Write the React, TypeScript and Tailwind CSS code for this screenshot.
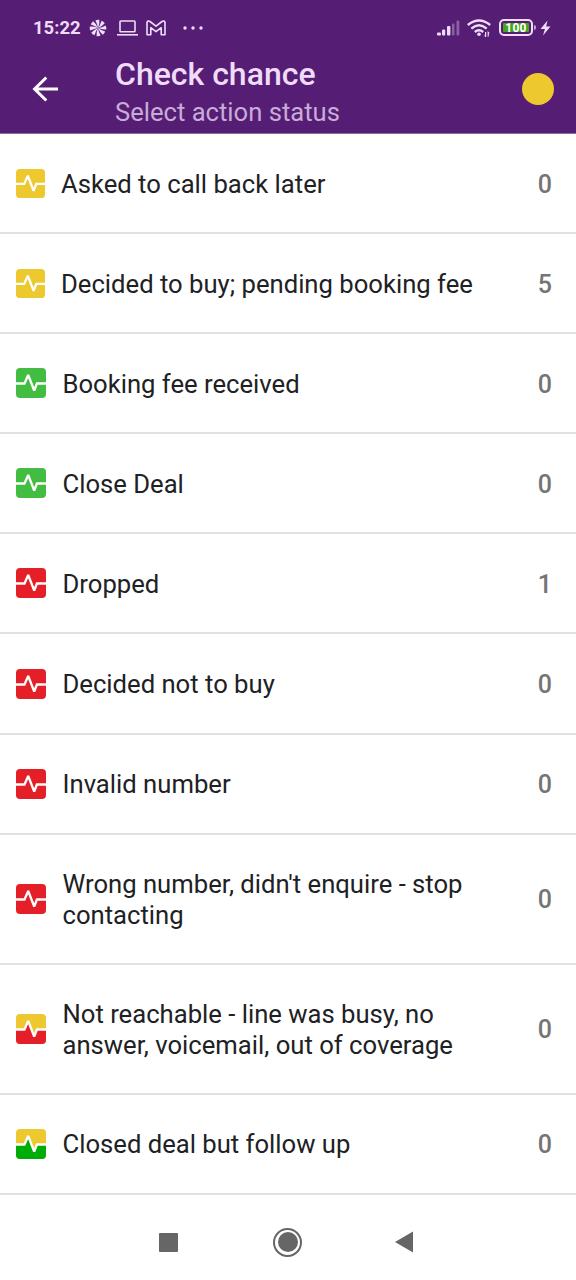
interface Status {
  label: string;
  count: number;
  top: string;
  bottom: string;
  compact?: boolean;
}

const YELLOW = "#edc92f";
const GREEN = "#42bd42";
const RED = "#e51f27";

const statuses: Status[] = [
  { label: "Asked to call back later", count: 0, top: YELLOW, bottom: YELLOW, compact: true },
  { label: "Decided to buy; pending booking fee", count: 5, top: YELLOW, bottom: YELLOW, compact: true },
  { label: "Booking fee received", count: 0, top: GREEN, bottom: GREEN },
  { label: "Close Deal", count: 0, top: GREEN, bottom: GREEN },
  { label: "Dropped", count: 1, top: RED, bottom: RED },
  { label: "Decided not to buy", count: 0, top: RED, bottom: RED },
  { label: "Invalid number", count: 0, top: RED, bottom: RED },
  { label: "Wrong number, didn't enquire - stop contacting", count: 0, top: RED, bottom: RED },
  {
    label: "Not reachable - line was busy, no answer, voicemail, out of coverage",
    count: 0,
    top: YELLOW,
    bottom: RED,
  },
  { label: "Closed deal but follow up", count: 0, top: YELLOW, bottom: "#00ad08" },
];

function PulseIcon({ top, bottom, compact }: Pick<Status, "top" | "bottom" | "compact">) {
  return (
    <svg viewBox="0 0 30 30" className={`shrink-0 ${compact ? "size-[29px]" : "size-[30px]"}`}>
      <rect width="30" height="30" rx="4" fill={top} />
      {bottom !== top && (
        <path d="M0 15.5H8.5L12.2 7L18.2 22.5L20.9 15.5H30V26A4 4 0 0 1 26 30H4A4 4 0 0 1 0 26Z" fill={bottom} />
      )}
      <path
        d="M0 15.5H8.5L12.2 7L18.2 22.5L20.9 15.5H30"
        fill="none"
        stroke="#fff"
        strokeWidth="2.3"
        strokeMiterlimit="2.5"
      />
    </svg>
  );
}

function StatusBar() {
  return (
    <div className="flex h-[55px] items-center pl-[33px] pr-[25px] text-[#eedcf8]">
      <span className="w-[46px] pt-px text-[18.5px] font-bold leading-none">15:22</span>
      <svg viewBox="0 0 18 18" className="ml-[10px] size-[18px]">
        {[0, 45, 90, 135, 180, 225, 270, 315].map((a) => (
          <path
            key={a}
            d="M9 9Q8.4 5 6.4 1.4Q8.4 0.4 10.4 0.8Q10.8 5 9 9Z"
            fill="currentColor"
            transform={`rotate(${a} 9 9)`}
          />
        ))}
      </svg>
      <svg viewBox="0 0 21 16" className="ml-[10px] h-4 w-[21px]" fill="none" stroke="currentColor" strokeWidth="1.6">
        <rect x="3" y="1" width="15" height="10.7" rx="0.8" />
        <path d="M0 14.8H21" />
      </svg>
      <svg viewBox="0 0 20 16" className="ml-[8px] h-4 w-5" fill="none" stroke="currentColor" strokeWidth="1.6" strokeLinejoin="round">
        <path d="M1 14.7V2.4Q1.8.3 4 1.5L10 6.2L16 1.5Q18.2.3 19 2.4V14.7H15.2V7.7L10 11.6L4.8 7.7V14.7Z" />
      </svg>
      <svg viewBox="0 0 20 4" className="ml-[17px] h-1 w-5" fill="currentColor">
        <circle cx="2" cy="2" r="1.7" />
        <circle cx="10" cy="2" r="1.7" />
        <circle cx="18" cy="2" r="1.7" />
      </svg>

      <svg viewBox="0 0 23 16" className="ml-auto h-4 w-[23px]" fill="currentColor">
        <rect x="0" y="12.5" width="4" height="3" rx="1" />
        <rect x="5" y="9.5" width="3.2" height="6" rx="1" />
        <rect x="10" y="6" width="3.4" height="9.5" rx="1" />
        <rect x="15" y="3.5" width="2.5" height="12" rx="1" opacity="0.35" />
        <rect x="19.5" y="0.5" width="2.8" height="15" rx="1" opacity="0.35" />
      </svg>
      <svg viewBox="0 0 24 18" className="ml-[7px] h-[18px] w-6" fill="none" stroke="currentColor" strokeWidth="2.4">
        <path d="M0.8 6Q12-3 23.2 6" />
        <path d="M4.3 9.6Q12 3 19.7 9.6" />
        <path d="M7.8 13Q12 9.4 16.2 13" />
        <circle cx="12" cy="15.3" r="1.8" fill="currentColor" stroke="none" />
        <path d="M18.6 13V17.4L17.6 16.4M21.2 17.6V13.4L22.2 14.4" strokeWidth="1.2" />
      </svg>
      <div className="ml-[8px] flex h-[17px] w-[34px] items-center rounded-[5px] border-2 border-current p-[2px]">
        <div className="flex h-full w-full items-center justify-center rounded-[1px] bg-[#45a41d] text-[12px] font-bold leading-none tracking-[0.3px] text-white">
          100
        </div>
      </div>
      <div className="ml-px h-[5px] w-[2px] rounded-r-sm bg-current opacity-70" />
      <svg viewBox="0 0 11 16" className="ml-[4px] h-4 w-[11px]" fill="currentColor">
        <path d="M7.5 0.5L0.5 9H4.9L3 15.5L10.5 6.5H6.2Z" />
      </svg>
    </div>
  );
}

export default function App() {
  return (
    <div className="flex h-[1280px] w-[576px] flex-col bg-white font-['Roboto',sans-serif]">
      <header className="h-[134px] shrink-0 border-b border-[#8d6da2] bg-[#561d75]">
        <StatusBar />
        <div className="flex h-[78px] items-start pl-[32px] pr-[22px]">
          <svg
            viewBox="0 0 26 26"
            className="mt-[21px] size-[26px]"
            fill="none"
            stroke="#fff"
            strokeWidth="3"
          >
            <path d="M26 13H3M14.3 1.5L2.6 13L14.3 24.5" />
          </svg>
          <div className="ml-[57px] flex-1">
            <h1 className="text-[32px] font-medium leading-[38px] text-[#eedcf8]">Check chance</h1>
            <p className="text-[25.6px] leading-[38px] text-[#c7acd8]">Select action status</p>
          </div>
          <div className="mt-[18px] size-8 rounded-full bg-[#edc92f]" />
        </div>
      </header>

      <ul>
        {statuses.map((s) => (
          <li
            key={s.label}
            className="flex min-h-[100.1px] items-center border-b-2 border-[#e1e1e1] px-4 py-8"
          >
            <PulseIcon top={s.top} bottom={s.bottom} compact={s.compact} />
            <span
              className={`w-[420px] pb-[0.5px] pt-[2.5px] text-[25.65px] leading-[30.5px] text-[#202124] ${s.compact ? "ml-4" : "ml-[16.5px]"}`}
            >
              {s.label}
            </span>
            <span className="ml-auto mr-2 pt-[3px] text-[25px] font-medium leading-[30px] text-[#757575]">
              {s.count}
            </span>
          </li>
        ))}
      </ul>

      <nav className="flex h-[85px] items-center pt-[10px]">
        <div className="ml-[159px] size-[19px] rounded-[1px] bg-[#666]" />
        <div className="ml-[95px] flex size-[29px] items-center justify-center rounded-full border-2 border-[#666]">
          <div className="size-5 rounded-full bg-[#666]" />
        </div>
        <svg viewBox="0 0 19 22" className="ml-[93px] h-[22px] w-[19px]" fill="#666">
          <path d="M0 11L18 0.5V21.5Z" />
        </svg>
      </nav>
    </div>
  );
}
